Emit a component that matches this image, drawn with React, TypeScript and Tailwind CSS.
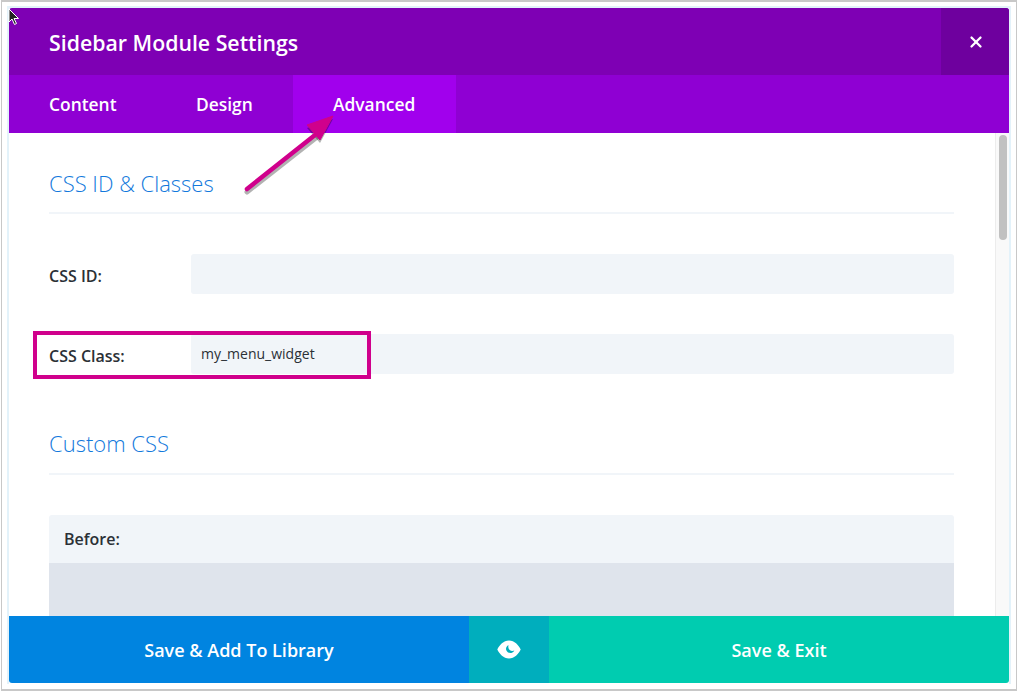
import { X } from "lucide-react";

function EyeIcon() {
  return (
    <svg width="24" height="19" viewBox="0 0 24 19" aria-hidden="true">
      <path
        fill="#fff"
        fillRule="evenodd"
        d="M12 0.5C17.5 0.5 21.5 5 23.7 9.5 21.5 14 17.5 18.5 12 18.5 6.5 18.5 2.5 14 0.3 9.5 2.5 5 6.5 0.5 12 0.5ZM11.5 5C9.5 6.2 8.5 8.2 9.3 10.3 10.2 12.6 12.8 13.6 15 12.8 16.1 12.4 16.9 11.6 17.3 10.6 15.8 11.4 14 11.2 12.7 10 11.4 8.7 11 6.7 11.5 5Z"
      />
    </svg>
  );
}

function SectionTitle({ children, className }: { children: string; className: string }) {
  return (
    <div className={`border-b-2 border-[#f1f5f9] ${className}`}>
      <h2 className="text-[22px] leading-[30px] font-light text-[#1279dc]">{children}</h2>
    </div>
  );
}

function Field({ label, value }: { label: string; value?: string }) {
  return (
    <div className="flex items-center h-10">
      <label className="w-[142px] pt-[3px] text-[16px] font-semibold text-[#2b3036]">{label}</label>
      <div className="flex-1 h-10 bg-[#f1f5f9] rounded-[3px] pl-[10px] pb-[2px] flex items-center text-[14px] text-[#2b3036]">
        {value}
      </div>
    </div>
  );
}

export default function App() {
  return (
    <div className="relative w-[1018px] h-[692px] bg-white overflow-hidden font-['Open_Sans',sans-serif]">
      {/* screenshot frame */}
      <div className="absolute left-[1px] top-0 w-[1016px] h-[691px] border-t-2 border-l border-b-2 border-r border-[#c8c8c8]" />
      <div className="absolute left-[7px] top-[6px] w-[1004px] h-[678px] border-t-2 border-l-2 border-r-2 border-[#e3f2fa]" />

      <div className="absolute left-[9px] top-[8px] w-[1000px] h-[675px] flex flex-col rounded-[3px] overflow-hidden bg-white">
        <header className="h-[67px] shrink-0 bg-[#7e00b4] flex items-center justify-between">
          <h1 className="pl-10 pt-[2px] text-[21.3px] font-semibold text-white">Sidebar Module Settings</h1>
          <button className="w-[68px] h-[67px] pl-[2px] bg-[#6e009e] flex items-center justify-center text-white">
            <X size={18} strokeWidth={3} />
          </button>
        </header>

        <nav className="h-[58px] shrink-0 bg-[#8f00d3] flex text-[17.4px] font-semibold text-white">
          <div className="w-[147px] pl-10 flex items-center">Content</div>
          <div className="w-[137px] pl-10 flex items-center">Design</div>
          <div className="w-[163px] pl-10 flex items-center bg-[#a100ed]">Advanced</div>
        </nav>

        <div className="flex-1 min-h-0 flex overflow-hidden">
          <main className="flex-1 pl-10 pr-[41px] pt-[35px]">
            <SectionTitle className="pb-[14px]">CSS ID &amp; Classes</SectionTitle>
            <div className="mt-10 flex flex-col gap-10">
              <Field label="CSS ID:" />
              <Field label="CSS Class:" value="my_menu_widget" />
            </div>
            <SectionTitle className="mt-[54px] pb-[15px]">Custom CSS</SectionTitle>
            <div className="mt-10 rounded-t-[3px] overflow-hidden">
              <div className="h-12 bg-[#f1f5f9] pl-[15px] flex items-center text-[16px] font-semibold text-[#2b3036]">
                Before:
              </div>
              <div className="h-[120px] bg-[#dfe4ec]" />
            </div>
          </main>
          <div className="w-[14px] shrink-0 bg-[#f9f9f9] border-l border-[#ececec] pt-[2px] pl-[3px]">
            <div className="w-2 h-[105px] rounded-full bg-[#c1c1c1]" />
          </div>
        </div>

        <footer className="h-[67px] shrink-0 flex text-[18px] font-semibold text-white">
          <button className="w-[460px] pt-[1px] bg-[#0084e0] flex items-center justify-center">Save &amp; Add To Library</button>
          <button className="w-20 bg-[#00aebd] flex items-center justify-center">
            <EyeIcon />
          </button>
          <button className="flex-1 pt-[1px] bg-[#00ccb0] flex items-center justify-center">Save &amp; Exit</button>
        </footer>
      </div>

      {/* annotation box */}
      <div className="absolute left-[33px] top-[331px] w-[338px] h-[48px] border-4 border-[#d0008c]" />

      {/* annotation arrow */}
      <svg className="absolute left-[235px] top-[105px]" width="110" height="95" viewBox="0 0 110 95" aria-hidden="true">
        <path d="M12 85 L82 30" stroke="#000" strokeOpacity="0.3" strokeWidth="5" strokeLinecap="round" transform="translate(0 2)" />
        <path d="M98 12 L72 21 L85 36 Z" fill="#000" fillOpacity="0.3" transform="translate(0 2)" />
        <path d="M12 84 L80 30" stroke="#d0008c" strokeWidth="4.5" strokeLinecap="round" />
        <path d="M98 11 L72 20 L85 35 Z" fill="#d0008c" stroke="#d0008c" strokeLinejoin="round" />
      </svg>

      {/* mouse pointer */}
      <svg className="absolute left-[8px] top-[8px]" width="12" height="18" viewBox="0 0 12 18" aria-hidden="true">
        <path d="M1 1V14L4 11L6.5 16.5L8.5 15.5L6 10.5H10.5Z" fill="#222" stroke="#fff" strokeWidth="1" />
      </svg>
    </div>
  );
}
